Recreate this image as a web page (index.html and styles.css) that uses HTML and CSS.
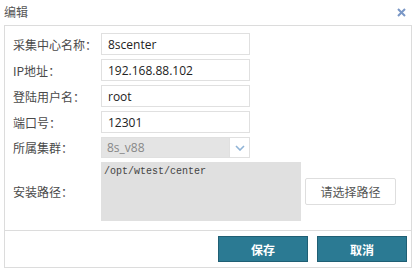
FILE: index.html
```html
<!DOCTYPE html>
<html lang="zh-CN">
  <head>
    <meta charset="UTF-8" />
    <title>编辑</title>
    <link rel="stylesheet" href="styles.css">
  </head>
  <body>
    <div class="dialog">
      <div class="dialog-head">
        <span class="dialog-title">编辑</span>
        <span class="dialog-close">
          <svg width="9" height="9" viewBox="0 0 9 9">
            <path d="M1 1L8 8M8 1L1 8" stroke="#7a97c6" stroke-width="2" />
          </svg>
        </span>
      </div>

      <div class="panel">
        <div class="form">
          <div class="row">
            <label>采集中心名称<span class="colon">：</span></label>
            <input class="field" type="text" value="8scenter" />
          </div>
          <div class="row">
            <label>IP地址<span class="colon">：</span></label>
            <input class="field" type="text" value="192.168.88.102" />
          </div>
          <div class="row">
            <label>登陆用户名<span class="colon">：</span></label>
            <input class="field" type="text" value="root" />
          </div>
          <div class="row">
            <label>端口号<span class="colon">：</span></label>
            <input class="field" type="text" value="12301" />
          </div>
          <div class="row">
            <label>所属集群<span class="colon">：</span></label>
            <div class="select">
              <span class="select-text">8s_v88</span>
              <span class="select-arrow">
                <svg width="10" height="6" viewBox="0 0 10 6">
                  <path d="M1 1L5 5L9 1" fill="none" stroke="#8fb3d6" stroke-width="1.6" />
                </svg>
              </span>
            </div>
          </div>
          <div class="row row-path">
            <label>安装路径<span class="colon">：</span></label>
            <div class="path-box">/opt/wtest/center</div>
            <button class="btn-path">请选择路径</button>
          </div>
        </div>

        <div class="footer">
          <button class="btn-main">保存</button>
          <button class="btn-main">取消</button>
        </div>
      </div>
    </div>
  </body>
</html>
```

FILE: styles.css
```css
* {
  box-sizing: border-box;
}

body {
  margin: 0;
  background: #ffffff;
  font-family: "Noto Sans CJK SC", sans-serif;
  font-size: 12px;
  color: #333;
}

.dialog {
  width: 416px;
  height: 272px;
}

.dialog-head {
  height: 25px;
  display: flex;
  justify-content: space-between;
  align-items: center;
  padding: 0 10px 2px 4px;
}

.dialog-title {
  color: #555;
  font-size: 12px;
}

.dialog-close {
  display: flex;
  padding-top: 1px;
}

.panel {
  margin: 0 4px 0 4px;
  border: 1px solid #dcdcdc;
  height: 243px;
  display: flex;
  flex-direction: column;
}

.form {
  flex: 1;
  padding: 7px 0 0 8px;
}

.row {
  display: flex;
  align-items: center;
  margin-bottom: 4px;
}

.row label {
  width: 88px;
  color: #4a4a4a;
  font-size: 12px;
}

/* 冒号居中，和原界面一致 */
.colon {
  font-family: "Noto Sans CJK TC", sans-serif;
}

.field {
  width: 149px;
  height: 22px;
  border: 1px solid #e0e0e0;
  padding: 0 6px;
  font-family: "Open Sans", sans-serif;
  font-size: 12px;
  color: #222;
  outline: none;
}

.select {
  width: 149px;
  height: 21px;
  border: 1px solid #e0e0e0;
  background: #e4e4e4;
  display: flex;
}

.select-text {
  flex: 1;
  padding-left: 5px;
  font-family: "Open Sans", sans-serif;
  font-size: 12px;
  line-height: 19px;
  color: #888;
}

.select-arrow {
  width: 20px;
  background: #ffffff;
  border-left: 1px solid #e0e0e0;
  display: flex;
  justify-content: center;
  align-items: center;
}

.row-path {
  margin-top: 1px;
}

.path-box {
  width: 200px;
  height: 59px;
  background: #e0e0e0;
  padding: 4px 3px;
  font-family: "Liberation Mono", monospace;
  font-size: 10px;
  color: #444;
}

.btn-path {
  margin-left: 4px;
  width: 91px;
  height: 27px;
  background: #ffffff;
  border: 1px solid #dedede;
  border-radius: 2px;
  font-family: "Noto Sans CJK SC", sans-serif;
  font-size: 12px;
  color: #555;
}

.footer {
  border-top: 1px solid #dcdcdc;
  height: 37px;
  display: flex;
  justify-content: flex-end;
  align-items: center;
  gap: 9px;
  padding-right: 4px;
}

.btn-main {
  width: 90px;
  height: 26px;
  background: #2b7a93;
  border: 1px solid #1f5f74;
  color: #ffffff;
  font-family: "Noto Sans CJK SC", sans-serif;
  font-size: 12px;
  font-weight: bold;
}
```
